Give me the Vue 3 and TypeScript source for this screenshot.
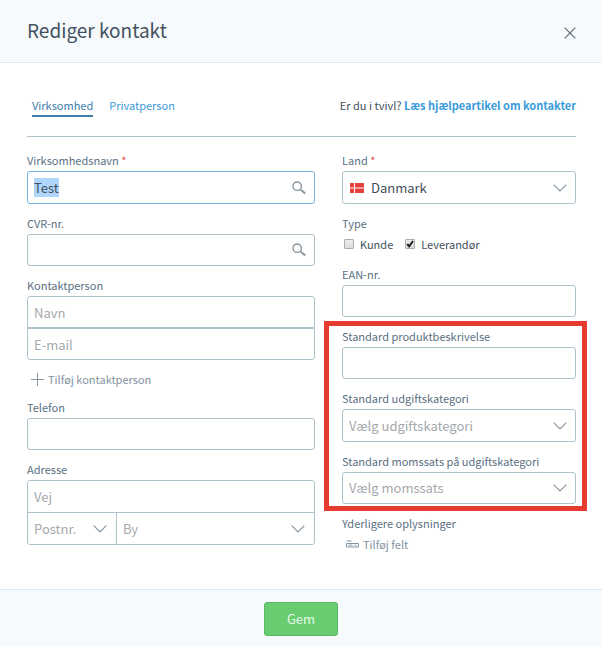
<script setup lang="ts">
import { onMounted, ref } from 'vue'

type ContactKind = 'company' | 'private'

const kind = ref<ContactKind>('company')
const companyName = ref('Test')
const cvr = ref('')
const contactName = ref('')
const contactEmail = ref('')
const phone = ref('')
const street = ref('')
const zip = ref('')
const city = ref('')
const country = ref('DK')
const isCustomer = ref(false)
const isSupplier = ref(true)
const ean = ref('')
const productText = ref('')
const category = ref('')
const vatRate = ref('')

const nameInput = ref<HTMLInputElement | null>(null)

onMounted(() => {
  nameInput.value?.focus()
  nameInput.value?.select()
})
</script>

<template>
  <form class="dialog" @submit.prevent>
    <header class="header">
      <h1 class="title">Rediger kontakt</h1>
      <button class="close" type="button" aria-label="Luk">
        <svg width="12" height="12" viewBox="0 0 12 12"><path d="M.7.7l10.6 10.6M11.3.7L.7 11.3" /></svg>
      </button>
    </header>

    <main class="body">
      <div class="topbar">
        <nav class="tabs">
          <a href="#" class="tab" :class="{ active: kind === 'company' }" @click.prevent="kind = 'company'">Virksomhed</a>
          <a href="#" class="tab" :class="{ active: kind === 'private' }" @click.prevent="kind = 'private'">Privatperson</a>
        </nav>
        <p class="help">Er du i tvivl? <a href="#">Læs hjælpeartikel om kontakter</a></p>
      </div>

      <div class="columns">
        <div class="column">
          <div class="field">
            <label class="label" for="name">Virksomhedsnavn <span class="required">*</span></label>
            <div class="control">
              <input id="name" ref="nameInput" v-model="companyName" class="box tall" type="text" />
              <svg class="icon search" width="14" height="14" viewBox="0 0 14 14">
                <circle cx="5.2" cy="5.2" r="4.2" /><path d="M8.4 8.4l2 1.7" /><path class="grip" d="M10 9.8l3.2 2.8" />
              </svg>
            </div>
          </div>

          <div class="field">
            <label class="label" for="cvr">CVR-nr.</label>
            <div class="control">
              <input id="cvr" v-model="cvr" class="box" type="text" />
              <svg class="icon search" width="14" height="14" viewBox="0 0 14 14">
                <circle cx="5.2" cy="5.2" r="4.2" /><path d="M8.4 8.4l2 1.7" /><path class="grip" d="M10 9.8l3.2 2.8" />
              </svg>
            </div>
          </div>

          <div class="field">
            <label class="label" for="contact">Kontaktperson</label>
            <input id="contact" v-model="contactName" class="box first" type="text" placeholder="Navn" />
            <input v-model="contactEmail" class="box last" type="email" placeholder="E-mail" aria-label="E-mail" />
          </div>
          <button class="add short" type="button">
            <svg width="13" height="13" viewBox="0 0 13 13"><path d="M6.5 0v13M0 6.5h13" /></svg>
            Tilføj kontaktperson
          </button>

          <div class="field">
            <label class="label" for="phone">Telefon</label>
            <input id="phone" v-model="phone" class="box" type="tel" />
          </div>

          <div class="field">
            <label class="label" for="street">Adresse</label>
            <div class="address">
              <input id="street" v-model="street" class="cell" type="text" placeholder="Vej" />
              <div class="city-row">
                <div class="control">
                  <select v-model="zip" class="cell empty" aria-label="Postnr.">
                    <option value="">Postnr.</option>
                  </select>
                  <svg class="icon chevron" width="14" height="8" viewBox="0 0 14 8"><path d="M.7.7L7 7 13.3.7" /></svg>
                </div>
                <div class="control divided">
                  <select v-model="city" class="cell empty" aria-label="By">
                    <option value="">By</option>
                  </select>
                  <svg class="icon chevron" width="14" height="8" viewBox="0 0 14 8"><path d="M.7.7L7 7 13.3.7" /></svg>
                </div>
              </div>
            </div>
          </div>
        </div>

        <div class="column">
          <div class="field">
            <label class="label" for="country">Land <span class="required">*</span></label>
            <div class="control">
              <select id="country" v-model="country" class="box tall with-flag">
                <option value="DK">Danmark</option>
              </select>
              <svg class="icon flag" width="14" height="10" viewBox="0 0 14 10">
                <path fill="#e5403c" d="M0 0h14v10H0z" /><path fill="#fff" d="M4 0h1v10H4zM0 4.5h14v1H0z" />
              </svg>
              <svg class="icon chevron" width="14" height="8" viewBox="0 0 14 8"><path d="M.7.7L7 7 13.3.7" /></svg>
            </div>
          </div>

          <div class="field" role="group" aria-labelledby="type-label">
            <span id="type-label" class="label">Type</span>
            <div class="checks">
              <label class="check">
                <span class="tick"><input v-model="isCustomer" type="checkbox" /></span>Kunde
              </label>
              <label class="check">
                <span class="tick">
                  <input v-model="isSupplier" type="checkbox" />
                  <svg v-if="isSupplier" width="10" height="10" viewBox="0 0 10 10"><path d="M2.2 5l2 2.4L8 2" /></svg>
                </span>Leverandør
              </label>
            </div>
          </div>

          <div class="field">
            <label class="label" for="ean">EAN-nr.</label>
            <input id="ean" v-model="ean" class="box" type="text" />
          </div>

          <div class="column highlighted">
            <div class="field">
              <label class="label" for="product">Standard produktbeskrivelse</label>
              <input id="product" v-model="productText" class="box" type="text" />
            </div>
            <div class="field">
              <label class="label" for="category">Standard udgiftskategori</label>
              <div class="control">
                <select id="category" v-model="category" class="box tall empty">
                  <option value="">Vælg udgiftskategori</option>
                </select>
                <svg class="icon chevron" width="14" height="8" viewBox="0 0 14 8"><path d="M.7.7L7 7 13.3.7" /></svg>
              </div>
            </div>
            <div class="field">
              <label class="label" for="vat">Standard momssats på udgiftskategori</label>
              <div class="control">
                <select id="vat" v-model="vatRate" class="box empty">
                  <option value="">Vælg momssats</option>
                </select>
                <svg class="icon chevron" width="14" height="8" viewBox="0 0 14 8"><path d="M.7.7L7 7 13.3.7" /></svg>
              </div>
            </div>
          </div>

          <div class="field">
            <span class="label">Yderligere oplysninger</span>
            <button class="add" type="button">
              <svg width="13" height="8" viewBox="0 0 13 8"><path d="M.5 1h5M.5 3.5h12v3.5H.5zM2.5 5.2h4M8.5 5.2h2" /></svg>
              Tilføj felt
            </button>
          </div>
        </div>
      </div>
    </main>

    <footer class="footer">
      <button class="save" type="submit">Gem</button>
    </footer>
  </form>
</template>

<style>
body {
  background: #fff;
}
</style>

<style scoped>
.dialog,
.dialog * {
  box-sizing: border-box;
}
.dialog {
  display: flex;
  flex-direction: column;
  min-height: 100vh;
  font-family: "Noto Sans CJK SC", "Noto Sans", sans-serif;
  font-size: 11px;
  line-height: 20px;
  color: #3f4f5c;
}
.dialog input,
.dialog select,
.dialog button {
  font-family: inherit;
  margin: 0;
}
svg {
  fill: none;
  stroke: #8796a1;
}
.header {
  display: flex;
  align-items: center;
  justify-content: space-between;
  padding: 14px 26px 16px 27px;
  background: #f6fafd;
  border-bottom: 1px solid #e2ebf1;
}
.title {
  margin: 0;
  font-size: 19px;
  line-height: 32px;
  font-weight: 400;
  color: #44525f;
}
.close {
  display: flex;
  padding: 5px 0 0;
  border: 0;
  background: none;
}
.close svg {
  stroke: #5d6b77;
  stroke-width: 1.2;
}
.body {
  flex: 1;
  padding: 32px 26px 35px 27px;
}
.topbar {
  display: flex;
  justify-content: space-between;
  padding: 0 0 19px 5px;
  border-bottom: 1px solid #b0c2cc;
}
.tabs {
  display: flex;
  gap: 16px;
}
a {
  color: #3a9bd9;
  text-decoration: none;
}
.tab {
  border-bottom: 2px solid transparent;
}
.tab.active {
  color: #3d7eab;
  border-color: #3d7eab;
}
.help {
  margin: 0;
}
.help a {
  font-weight: 700;
}
.columns {
  display: grid;
  grid-template-columns: 288fr 234fr;
  gap: 27px;
  align-items: start;
  padding-top: 14px;
}
.column {
  display: flex;
  flex-direction: column;
  gap: 10px;
  min-width: 0;
}
.label {
  display: block;
  padding-bottom: 2px;
  line-height: 18px;
  color: #5a7082;
}
.required {
  color: #e8504a;
}
.control {
  position: relative;
  display: flex;
  align-items: center;
}
.box,
.cell {
  display: block;
  width: 100%;
  height: 32px;
  padding: 0 6px;
  border: 1px solid #b0c2cc;
  border-radius: 3px;
  background: #fff;
  color: #3f4f5c;
  font-size: 13px;
  line-height: 18px;
  outline: 0;
  appearance: none;
}
select.box,
select.cell {
  line-height: 24px;
}
.tall {
  height: 33px;
}
.box:focus {
  border-color: #7ab6df;
}
.box::selection {
  background: #b0d5fb;
  color: #3f4f5c;
}
.box::placeholder,
.cell::placeholder {
  color: #a5a9ac;
  opacity: 1;
}
.box.empty,
.cell.empty {
  color: #a5a9ac;
}
.first {
  border-radius: 3px 3px 0 0;
}
.last {
  border-radius: 0 0 3px 3px;
}
.with-flag {
  padding-left: 28px;
}
.address {
  border: 1px solid #b0c2cc;
  border-radius: 3px;
}
.cell {
  height: 31px;
  border: 0;
}
.city-row {
  display: grid;
  grid-template-columns: 88fr 198fr;
  border-top: 1px solid #b0c2cc;
}
.divided {
  border-left: 1px solid #b0c2cc;
}
.icon {
  position: absolute;
  pointer-events: none;
}
.search {
  right: 9px;
  stroke-width: 1.4;
}
.grip {
  stroke-width: 2;
}
.chevron {
  right: 9px;
  stroke-width: 1.2;
}
.flag {
  left: 8px;
  stroke: none;
}
.checks {
  display: flex;
  gap: 12px;
  padding: 0 0 1px 2px;
}
.check {
  display: flex;
  align-items: center;
  gap: 6px;
}
.tick {
  position: relative;
  display: flex;
}
.tick input {
  width: 10px;
  height: 10px;
  border: 1px solid #adadad;
  border-radius: 1px;
  background: linear-gradient(#eee, #dcdcdc);
  appearance: none;
}
.tick svg {
  position: absolute;
  inset: 0;
  stroke: #222;
  stroke-width: 2;
}
.highlighted {
  position: relative;
}
.highlighted::after {
  content: "";
  position: absolute;
  inset: -6px -11px -7px -18px;
  border: 5px solid #e63c30;
  pointer-events: none;
}
.add {
  display: flex;
  align-items: center;
  gap: 4px;
  height: 20px;
  padding: 0 4px;
  border: 0;
  background: none;
  color: #8292a0;
  font-size: 11px;
  line-height: 18px;
}
.short {
  height: 18px;
}
.footer {
  display: flex;
  justify-content: center;
  padding: 12px 0 10px;
  background: #f6fafd;
  border-top: 1px solid #dfe8ee;
}
.save {
  height: 34px;
  padding: 0 22px;
  border: 1px solid #5bb865;
  border-radius: 3px;
  background: #68cd70;
  color: #e9f9ea;
  font-size: 13px;
  line-height: 18px;
}
</style>
